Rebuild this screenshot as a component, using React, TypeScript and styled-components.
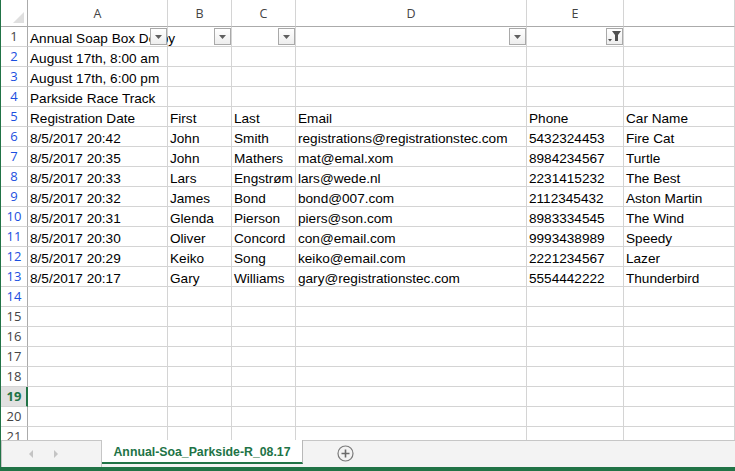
import React from "react";
import styled, { createGlobalStyle } from "styled-components";

const GlobalStyle = createGlobalStyle`
  html, body { margin: 0; padding: 0; background: #ffffff; overflow: hidden; }
  #root { width: 735px; height: 471px; }
`;

const GREEN = "#217346";
const GRID = "#d4d4d4";

const Window = styled.div`
  width: 735px;
  height: 471px;
  box-sizing: border-box;
  border-left: 1px solid ${GREEN};
  display: flex;
  flex-direction: column;
  overflow: hidden;
  background: #fff;
`;

const Sheet = styled.div`
  height: 440px;
  overflow: hidden;
  display: grid;
  grid-template-columns: 27px 140px 64px 64px 231px 97px 1fr;
  grid-template-rows: 27px;
  grid-auto-rows: 20px;
`;

const Corner = styled.div`
  position: relative;
  box-sizing: border-box;
  border-right: 1px solid #ababab;
  border-bottom: 1px solid #ababab;
  &::after {
    content: "";
    position: absolute;
    right: 3px;
    bottom: 3px;
    width: 0;
    height: 0;
    border-left: 11px solid transparent;
    border-bottom: 11px solid #dfdfdf;
  }
`;

const ColHead = styled.div`
  box-sizing: border-box;
  border-right: 1px solid ${GRID};
  border-bottom: 1px solid #ababab;
  display: flex;
  align-items: flex-end;
  justify-content: center;
  padding-bottom: 4px;
  font-family: "Open Sans", "Noto Sans", sans-serif;
  font-size: 12.5px;
  line-height: 16px;
  color: #444;
`;

const RowHead = styled.div<{ $tone: "blue" | "gray" | "active" }>`
  box-sizing: border-box;
  border-right: ${(p) => (p.$tone === "active" ? `2px solid ${GREEN}` : "1px solid #ababab")};
  border-bottom: 1px solid ${GRID};
  background: ${(p) => (p.$tone === "active" ? "#e1e1e1" : "#fff")};
  display: flex;
  align-items: flex-end;
  justify-content: center;
  padding-bottom: 1px;
  padding-left: ${(p) => (p.$tone === "active" ? "1px" : "0")};
  font-family: "Open Sans", "Noto Sans", sans-serif;
  font-size: 13px;
  line-height: 17px;
  font-weight: ${(p) => (p.$tone === "active" ? 700 : 400)};
  color: ${(p) => (p.$tone === "blue" ? "#1b4fe0" : p.$tone === "active" ? GREEN : "#444")};
`;

const Cell = styled.div`
  position: relative;
  box-sizing: border-box;
  border-right: 1px solid ${GRID};
  border-bottom: 1px solid ${GRID};
  display: flex;
  align-items: flex-end;
  padding-left: 2px;
  white-space: nowrap;
  font-family: "Liberation Sans", Arial, sans-serif;
  font-size: 13.6px;
  line-height: 15px;
  color: #000;
`;

const Overflow = styled.span`
  position: relative;
  z-index: 1;
`;

const FilterButton = styled.div`
  position: absolute;
  right: 0;
  top: 1px;
  width: 17px;
  height: 17px;
  box-sizing: border-box;
  border: 1px solid #a9a9a9;
  background: linear-gradient(#ffffff, #eeeeee);
  display: flex;
  align-items: center;
  justify-content: center;
  z-index: 2;
`;

const TabBar = styled.div`
  height: 27px;
  display: flex;
  background: #f3f3f3;
`;

const Nav = styled.div`
  width: 101px;
  box-sizing: border-box;
  border-top: 1px solid #c6c6c6;
  border-left: 1px solid #c6c6c6;
  border-right: 1px solid #c6c6c6;
  display: flex;
  align-items: center;
  padding-left: 27px;
  gap: 21px;
`;

const Arrow = styled.div<{ $dir: "left" | "right" }>`
  width: 0;
  height: 0;
  border-top: 4px solid transparent;
  border-bottom: 4px solid transparent;
  ${(p) => (p.$dir === "left" ? "border-right: 4px solid #c4c4c4;" : "border-left: 4px solid #c4c4c4;")}
`;

const ActiveTab = styled.div`
  width: 201px;
  height: 24px;
  box-sizing: border-box;
  background: #fff;
  border-right: 1px solid #b8b8b8;
  border-bottom: 2px solid ${GREEN};
  display: flex;
  align-items: center;
  justify-content: center;
  padding-top: 1px;
  font-family: "Liberation Sans", Arial, sans-serif;
  font-weight: 700;
  font-size: 12.3px;
  color: ${GREEN};
`;

const TabRest = styled.div`
  flex: 1;
  border-top: 1px solid #c6c6c6;
  display: flex;
  align-items: center;
  padding-left: 34px;
  padding-bottom: 1px;
`;

const StatusStrip = styled.div`
  height: 4px;
  background: ${GREEN};
`;

const Caret = () => (
  <svg width="7" height="4" viewBox="0 0 7 4">
    <path d="M0 0h7L3.5 4z" fill="#5f5f5f" />
  </svg>
);

const Funnel = () => (
  <svg width="13" height="11" viewBox="0 0 13 11">
    <path d="M4 0h9L10 4v6H7V4z" fill="#4f4f4f" />
    <path d="M0 8h4L2 10.5z" fill="#4f4f4f" />
  </svg>
);

const PlusCircle = () => (
  <svg width="17" height="17" viewBox="0 0 17 17">
    <circle cx="8.5" cy="8.5" r="7.5" fill="none" stroke="#7a7a7a" strokeWidth="1.2" />
    <path d="M8.5 4.5v8M4.5 8.5h8" stroke="#6a6a6a" strokeWidth="1.6" />
  </svg>
);

const columns = ["A", "B", "C", "D", "E", ""];

const rows: string[][] = [
  ["Annual Soap Box Derby", "", "", "", "", ""],
  ["August 17th, 8:00 am", "", "", "", "", ""],
  ["August 17th, 6:00 pm", "", "", "", "", ""],
  ["Parkside Race Track", "", "", "", "", ""],
  ["Registration Date", "First", "Last", "Email", "Phone", "Car Name"],
  ["8/5/2017 20:42", "John", "Smith", "registrations@registrationstec.com", "5432324453", "Fire Cat"],
  ["8/5/2017 20:35", "John", "Mathers", "mat@emal.xom", "8984234567", "Turtle"],
  ["8/5/2017 20:33", "Lars", "Engstrøm", "lars@wede.nl", "2231415232", "The Best"],
  ["8/5/2017 20:32", "James", "Bond", "bond@007.com", "2112345432", "Aston Martin"],
  ["8/5/2017 20:31", "Glenda", "Pierson", "piers@son.com", "8983334545", "The Wind"],
  ["8/5/2017 20:30", "Oliver", "Concord", "con@email.com", "9993438989", "Speedy"],
  ["8/5/2017 20:29", "Keiko", "Song", "keiko@email.com", "2221234567", "Lazer"],
  ["8/5/2017 20:17", "Gary", "Williams", "gary@registrationstec.com", "5554442222", "Thunderbird"],
];

const TOTAL_ROWS = 21;

function toneFor(n: number): "blue" | "gray" | "active" {
  if (n === 19) return "active";
  if (n >= 2 && n <= 14) return "blue";
  return "gray";
}

export default function App() {
  const body: React.ReactNode[] = [];
  for (let r = 1; r <= TOTAL_ROWS; r++) {
    const data = rows[r - 1] || ["", "", "", "", "", ""];
    body.push(
      <RowHead key={`h${r}`} $tone={toneFor(r)}>
        {r}
      </RowHead>
    );
    data.forEach((v, c) => {
      body.push(
        <Cell key={`c${r}-${c}`}>
          {r === 1 ? <Overflow>{v}</Overflow> : v}
          {r === 1 && c < 5 && (
            <FilterButton>{c === 4 ? <Funnel /> : <Caret />}</FilterButton>
          )}
        </Cell>
      );
    });
  }

  return (
    <>
      <GlobalStyle />
      <Window>
        <Sheet>
          <Corner />
          {columns.map((c, i) => (
            <ColHead key={i}>{c}</ColHead>
          ))}
          {body}
        </Sheet>
        <TabBar>
          <Nav>
            <Arrow $dir="left" />
            <Arrow $dir="right" />
          </Nav>
          <ActiveTab>Annual-Soa_Parkside-R_08.17</ActiveTab>
          <TabRest>
            <PlusCircle />
          </TabRest>
        </TabBar>
        <StatusStrip />
      </Window>
    </>
  );
}
